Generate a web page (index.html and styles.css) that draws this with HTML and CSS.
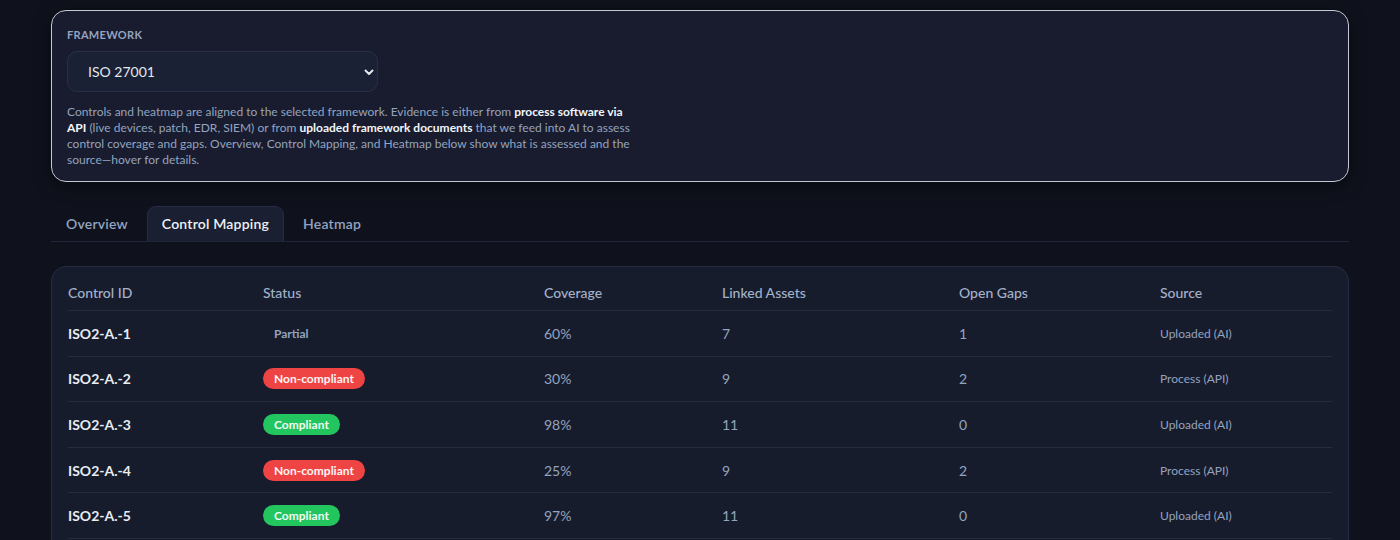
FILE: index.html
```html
<!DOCTYPE html>
<html lang="en">
<head>
<meta charset="utf-8">
<title>Control Mapping</title>
<link rel="stylesheet" href="styles.css">
</head>
<body>
<main class="page">
  <section class="fw-card">
    <div class="fw-label">Framework</div>
    <div class="select">
      <span class="select-value">ISO 27001</span>
      <svg class="chev" viewBox="0 0 12 12" width="12" height="12"><path d="M2.5 4.5 6 8l3.5-3.5" fill="none" stroke="#e5e7eb" stroke-width="2" stroke-linecap="round" stroke-linejoin="round"/></svg>
    </div>
    <p class="fw-desc">Controls and heatmap are aligned to the selected framework. Evidence is either from <b>process software via API</b> (live devices, patch, EDR, SIEM) or from <b>uploaded framework documents</b> that we feed into AI to assess control coverage and gaps. Overview, Control Mapping, and Heatmap below show what is assessed and the source—hover for details.</p>
  </section>

  <nav class="tabs">
    <div class="tab">Overview</div>
    <div class="tab active">Control Mapping</div>
    <div class="tab">Heatmap</div>
  </nav>

  <section class="table-card">
    <div class="row head">
      <div>Control ID</div><div>Status</div><div>Coverage</div><div>Linked Assets</div><div>Open Gaps</div><div>Source</div>
    </div>
    <div class="row">
      <div class="cid">ISO2-A.-1</div><div><span class="badge partial">Partial</span></div><div class="num">60%</div><div class="num">7</div><div class="num">1</div><div class="src">Uploaded (AI)</div>
    </div>
    <div class="row">
      <div class="cid">ISO2-A.-2</div><div><span class="badge bad">Non-compliant</span></div><div class="num">30%</div><div class="num">9</div><div class="num">2</div><div class="src">Process (API)</div>
    </div>
    <div class="row">
      <div class="cid">ISO2-A.-3</div><div><span class="badge ok">Compliant</span></div><div class="num">98%</div><div class="num">11</div><div class="num">0</div><div class="src">Uploaded (AI)</div>
    </div>
    <div class="row">
      <div class="cid">ISO2-A.-4</div><div><span class="badge bad">Non-compliant</span></div><div class="num">25%</div><div class="num">9</div><div class="num">2</div><div class="src">Process (API)</div>
    </div>
    <div class="row">
      <div class="cid">ISO2-A.-5</div><div><span class="badge ok">Compliant</span></div><div class="num">97%</div><div class="num">11</div><div class="num">0</div><div class="src">Uploaded (AI)</div>
    </div>
  </section>
</main>
</body>
</html>
```

FILE: styles.css
```css
* { box-sizing: border-box; }
html, body { margin: 0; padding: 0; }
body {
  background: #0f121c;
  font-family: "Lato", "Noto Sans", sans-serif;
  color: #e2e8f0;
  overflow: hidden;
}
.page {
  padding: 10px 51px 0 51px;
}
.fw-card {
  background: #181c2e;
  border: 1px solid #c3c8d4;
  border-radius: 15px;
  padding: 16px 15px 13px 15px;
  box-shadow: 0 4px 18px rgba(0, 0, 0, 0.45);
}
.fw-label {
  font-size: 11px;
  line-height: 16px;
  font-weight: 700;
  letter-spacing: 0.3px;
  text-transform: uppercase;
  color: #94a3c0;
}
.select {
  margin-top: 8px;
  width: 311px;
  height: 41px;
  border: 1px solid #283049;
  border-radius: 10px;
  background: #1b2134;
  display: flex;
  align-items: center;
  justify-content: space-between;
  padding: 0 2px 0 20px;
}
.select-value {
  font-size: 14px;
  color: #e2e8f0;
}
.fw-desc {
  margin: 12px 0 0 0;
  max-width: 572px;
  font-size: 12px;
  line-height: 16px;
  color: #94a3bf;
}
.fw-desc b {
  color: #f1f5f9;
  font-weight: 700;
}
.tabs {
  margin-top: 24px;
  display: flex;
  gap: 4px;
  border-bottom: 1px solid #1f2639;
}
.tab {
  padding: 0 14px;
  height: 35px;
  line-height: 33px;
  font-size: 14px;
  font-weight: 600;
  letter-spacing: 0.2px;
  color: #94a3c0;
  border: 1px solid transparent;
  border-bottom: 0;
  border-radius: 9px 9px 0 0;
}
.tab.active {
  background: #1a1f32;
  border-color: #262d43;
  color: #eef2f7;
}
.table-card {
  margin-top: 24px;
  background: #171c2d;
  border: 1px solid #252c42;
  border-radius: 15px;
  padding: 8px 16px 24px 16px;
}
.row {
  display: grid;
  grid-template-columns: 195px 281px 178px 237px 201px 1fr;
  align-items: center;
  height: 45.6px;
  border-bottom: 1px solid #252c40;
  font-size: 14px;
}
.row.head {
  height: 36px;
  font-weight: 500;
  color: #a3b1c9;
}
.cid {
  font-weight: 700;
  color: #e8ecf3;
}
.num {
  color: #94a3bf;
}
.src {
  font-size: 12px;
  color: #94a3bf;
}
.badge {
  display: inline-block;
  font-size: 12px;
  font-weight: 700;
  line-height: 21px;
  padding: 0 11px;
  border-radius: 999px;
}
.badge.partial {
  color: #94a3bf;
  background: transparent;
}
.badge.bad {
  background: #ef4444;
  color: #fff5f5;
}
.badge.ok {
  background: #22c55e;
  color: #f0fdf4;
}
```
